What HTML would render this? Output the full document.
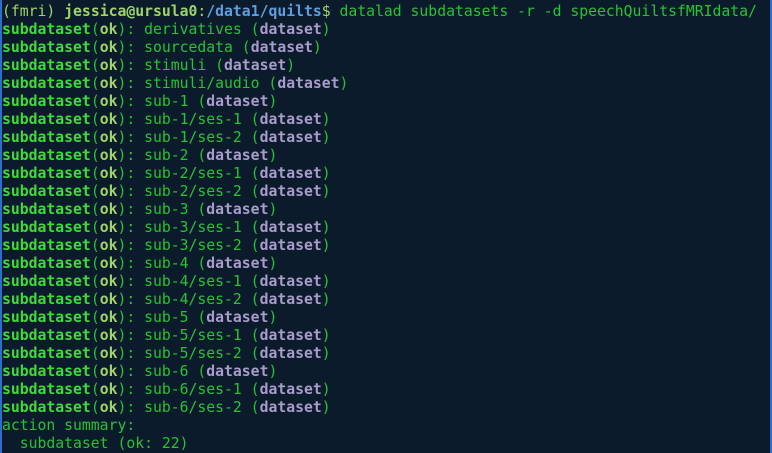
<!DOCTYPE html>
<html><head><meta charset="utf-8"><style>
html,body{margin:0;padding:0;}
body{width:772px;height:453px;background:#0b1b2b;overflow:hidden;box-sizing:border-box;border-left:2px solid #2a6fd0;border-right:2px solid #2a6fd0;}
pre{margin:0;padding:3px 0 0 0;font-family:"DejaVu Sans Mono","Liberation Mono",monospace;font-size:14.75px;line-height:18px;color:#26c334;white-space:pre;}
b{color:#3ddc3a;font-weight:bold}
.ok{color:#9fd468;font-weight:bold}
.d{color:#a99ccb;font-weight:bold}
.p{color:#9fd468}
.pb{color:#9fd468;font-weight:bold}
.bl{color:#5d9fe0;font-weight:bold}
</style></head><body><pre><span class="p">(fmri) </span><span class="pb">jessica@ursula0</span><span class="p">:</span><span class="bl">/data1/quilts</span><span class="p">$</span> datalad subdatasets -r -d speechQuiltsfMRIdata/
<b>subdataset</b>(<span class="ok">ok</span>): derivatives (<span class="d">dataset</span>)
<b>subdataset</b>(<span class="ok">ok</span>): sourcedata (<span class="d">dataset</span>)
<b>subdataset</b>(<span class="ok">ok</span>): stimuli (<span class="d">dataset</span>)
<b>subdataset</b>(<span class="ok">ok</span>): stimuli/audio (<span class="d">dataset</span>)
<b>subdataset</b>(<span class="ok">ok</span>): sub-1 (<span class="d">dataset</span>)
<b>subdataset</b>(<span class="ok">ok</span>): sub-1/ses-1 (<span class="d">dataset</span>)
<b>subdataset</b>(<span class="ok">ok</span>): sub-1/ses-2 (<span class="d">dataset</span>)
<b>subdataset</b>(<span class="ok">ok</span>): sub-2 (<span class="d">dataset</span>)
<b>subdataset</b>(<span class="ok">ok</span>): sub-2/ses-1 (<span class="d">dataset</span>)
<b>subdataset</b>(<span class="ok">ok</span>): sub-2/ses-2 (<span class="d">dataset</span>)
<b>subdataset</b>(<span class="ok">ok</span>): sub-3 (<span class="d">dataset</span>)
<b>subdataset</b>(<span class="ok">ok</span>): sub-3/ses-1 (<span class="d">dataset</span>)
<b>subdataset</b>(<span class="ok">ok</span>): sub-3/ses-2 (<span class="d">dataset</span>)
<b>subdataset</b>(<span class="ok">ok</span>): sub-4 (<span class="d">dataset</span>)
<b>subdataset</b>(<span class="ok">ok</span>): sub-4/ses-1 (<span class="d">dataset</span>)
<b>subdataset</b>(<span class="ok">ok</span>): sub-4/ses-2 (<span class="d">dataset</span>)
<b>subdataset</b>(<span class="ok">ok</span>): sub-5 (<span class="d">dataset</span>)
<b>subdataset</b>(<span class="ok">ok</span>): sub-5/ses-1 (<span class="d">dataset</span>)
<b>subdataset</b>(<span class="ok">ok</span>): sub-5/ses-2 (<span class="d">dataset</span>)
<b>subdataset</b>(<span class="ok">ok</span>): sub-6 (<span class="d">dataset</span>)
<b>subdataset</b>(<span class="ok">ok</span>): sub-6/ses-1 (<span class="d">dataset</span>)
<b>subdataset</b>(<span class="ok">ok</span>): sub-6/ses-2 (<span class="d">dataset</span>)
action summary:
  subdataset (ok: 22)</pre></body></html>
